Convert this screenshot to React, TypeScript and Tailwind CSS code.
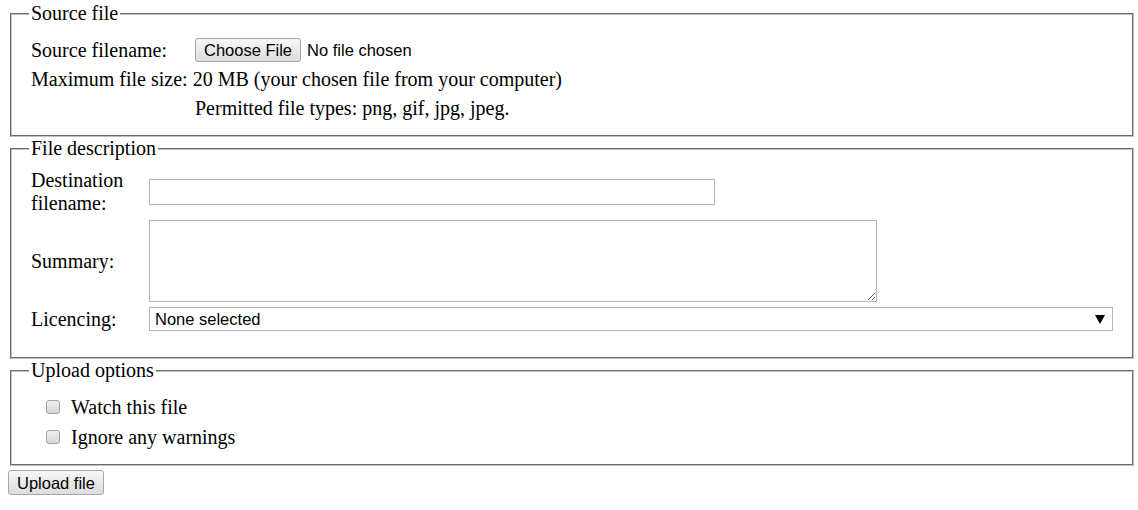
import React from 'react';

/* ---------- native-looking controls ---------- */

const PlainButton: React.FC<{ label: string; className?: string }> = ({ label, className = '' }) => (
  <button
    type="button"
    className={`h-[24px] px-[8px] border border-[#a6a6a6] rounded-[3px] bg-gradient-to-b from-[#f7f7f7] to-[#dddddd] text-[16.5px] leading-[20px] text-black font-['Liberation_Sans',Arial,sans-serif] ${className}`}
  >
    {label}
  </button>
);

const FakeCheckbox: React.FC = () => (
  <span className="inline-block w-[14px] h-[14px] rounded-[3px] border border-[#a3a3a3] bg-gradient-to-b from-[#efefef] to-[#d6d6d6]" />
);

const Box: React.FC<{ legend: string; className?: string; children: React.ReactNode }> = ({ legend, className = '', children }) => (
  <fieldset className={`border-2 [border-style:groove] border-[#c0c0c0] px-[17px] ${className}`}>
    <legend className="px-[2px] leading-[23px]">{legend}</legend>
    {children}
  </fieldset>
);

export default function App() {
  return (
    <div className="w-[1138px] h-[510px] bg-white text-black text-[20px] leading-[23px] font-['Liberation_Serif','Times_New_Roman',serif]">
      <div className="pt-[2px] pl-[10px] pr-[4px]">
        {/* Source file */}
        <Box legend="Source file" className="pt-[11px] pb-[12px]">
          <div className="pl-[2px]">
            <div className="flex items-center h-[29px]">
              <span className="w-[164px]">Source filename:</span>
              <PlainButton label="Choose File" className="-mt-[1px]" />
              <span className="ml-[6px] text-[16.5px] font-['Liberation_Sans',Arial,sans-serif]">No file chosen</span>
            </div>
            <div className="flex items-center h-[29px]">
              Maximum file size: 20 MB (your chosen file from your computer)
            </div>
            <div className="flex items-center h-[29px] pl-[164px]">
              Permitted file types: png, gif, jpg, jpeg.
            </div>
          </div>
        </Box>

        {/* File description */}
        <Box legend="File description" className="pt-[9px] pb-[25px]">
          <div className="pl-[2px] flex flex-col">
            <div className="flex items-center h-[46px]">
              <span className="w-[118px] pr-[4px]">Destination filename:</span>
              <input
                type="text"
                className="w-[566px] h-[26px] border border-[#b5b5b5] bg-white outline-none"
              />
            </div>
            <div className="flex items-center h-[84px] mt-[4px]">
              <span className="w-[118px]">Summary:</span>
              <textarea className="w-[728px] h-[82px] border border-[#b5b5b5] bg-white outline-none" />
            </div>
            <div className="flex items-center h-[26px] mt-[3px]">
              <span className="w-[118px]">Licencing:</span>
              <div className="w-[964px] h-[24px] border border-[#b5b5b5] bg-white flex items-center justify-between pl-[5px] pr-[7px] text-[16.5px] font-['Liberation_Sans',Arial,sans-serif]">
                <span>None selected</span>
                <svg width="10" height="9" viewBox="0 0 10 9">
                  <path d="M0 0h10L5 9z" fill="#000" />
                </svg>
              </div>
            </div>
          </div>
        </Box>

        {/* Upload options */}
        <Box legend="Upload options" className="pt-[10px] pb-[12px]">
          <div className="flex flex-col">
            <label className="flex items-center h-[30px] pl-[17px]">
              <FakeCheckbox />
              <span className="ml-[11px]">Watch this file</span>
            </label>
            <label className="flex items-center h-[30px] pl-[17px]">
              <FakeCheckbox />
              <span className="ml-[11px]">Ignore any warnings</span>
            </label>
          </div>
        </Box>
      </div>
      <div className="flex pl-[8px] pt-[4px]">
        <PlainButton label="Upload file" className="h-[25px]" />
      </div>
    </div>
  );
}
